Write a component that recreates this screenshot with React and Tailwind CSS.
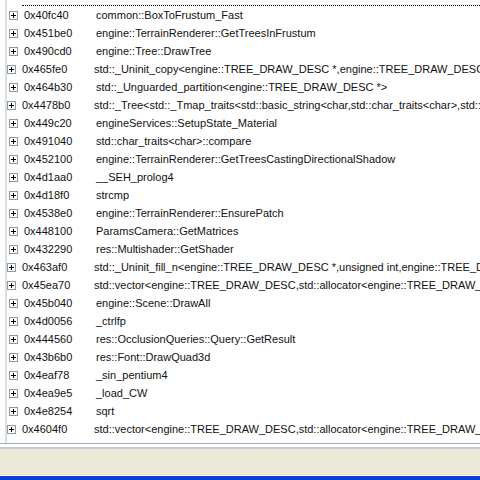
const rows = [
  ["0x40fc40", "common::BoxToFrustum_Fast"],
  ["0x451be0", "engine::TerrainRenderer::GetTreesInFrustum"],
  ["0x490cd0", "engine::Tree::DrawTree"],
  ["0x465fe0", "std::_Uninit_copy<engine::TREE_DRAW_DESC *,engine::TREE_DRAW_DESC *,std::allocator<engine::TREE_DRAW_DESC> >"],
  ["0x464b30", "std::_Unguarded_partition<engine::TREE_DRAW_DESC *>"],
  ["0x4478b0", "std::_Tree<std::_Tmap_traits<std::basic_string<char,std::char_traits<char>,std::allocator<char> > >"],
  ["0x449c20", "engineServices::SetupState_Material"],
  ["0x491040", "std::char_traits<char>::compare"],
  ["0x452100", "engine::TerrainRenderer::GetTreesCastingDirectionalShadow"],
  ["0x4d1aa0", "__SEH_prolog4"],
  ["0x4d18f0", "strcmp"],
  ["0x4538e0", "engine::TerrainRenderer::EnsurePatch"],
  ["0x448100", "ParamsCamera::GetMatrices"],
  ["0x432290", "res::Multishader::GetShader"],
  ["0x463af0", "std::_Uninit_fill_n<engine::TREE_DRAW_DESC *,unsigned int,engine::TREE_DRAW_DESC,std::allocator>"],
  ["0x45ea70", "std::vector<engine::TREE_DRAW_DESC,std::allocator<engine::TREE_DRAW_DESC> >::_Insert_n"],
  ["0x45b040", "engine::Scene::DrawAll"],
  ["0x4d0056", "_ctrlfp"],
  ["0x444560", "res::OcclusionQueries::Query::GetResult"],
  ["0x43b6b0", "res::Font::DrawQuad3d"],
  ["0x4eaf78", "_sin_pentium4"],
  ["0x4ea9e5", "_load_CW"],
  ["0x4e8254", "sqrt"],
  ["0x4604f0", "std::vector<engine::TREE_DRAW_DESC,std::allocator<engine::TREE_DRAW_DESC> >::_Insert_n"],
];

function PlusBox() {
  return (
    <svg width="9" height="9" viewBox="0 0 9 9" className="shrink-0">
      <rect x="0.5" y="0.5" width="8" height="8" fill="#fff" stroke="#919b9c" />
      <path d="M2 4.5H7M4.5 2V7" stroke="#000" strokeWidth="1" />
    </svg>
  );
}

export default function App() {
  return (
    <div className="w-[480px] h-[480px] overflow-hidden bg-white flex flex-col" style={{ fontFamily: "Tahoma, 'Liberation Sans', Arial, sans-serif" }}>
      <div className="flex-1 flex min-h-0">
        <div className="w-[5px] bg-white" />
        <div className="w-[2px] bg-[#d8dde6]" />
        <div className="flex-1 min-w-0 flex flex-col overflow-hidden">
          <div className="h-[6px] ml-[15px] border-b border-dotted border-[#000]" />
          <div className="flex flex-col">
            {rows.map(([a, n], i) => (
              <div key={i} className="h-[18px] flex items-center whitespace-nowrap text-[11px] text-[#111]">
                <div className="w-[2px]" />
                <PlusBox />
                <span className="ml-[6px] w-[72px] shrink-0">{a}</span>
                <span>{n}</span>
              </div>
            ))}
          </div>
        </div>
      </div>
      <div className="h-[1px] bg-[#a5acb5]" />
      <div className="h-[3px] bg-white" />
      <div className="h-[2px] bg-[#c2c8d6]" />
      <div className="h-[25px] bg-[#ece9d8]" />
      <div className="h-[1px] bg-[#f4d9d4]" />
      <div className="h-[1px] bg-white" />
      <div className="h-[4px] bg-[#0a3fd8]" />
    </div>
  );
}
